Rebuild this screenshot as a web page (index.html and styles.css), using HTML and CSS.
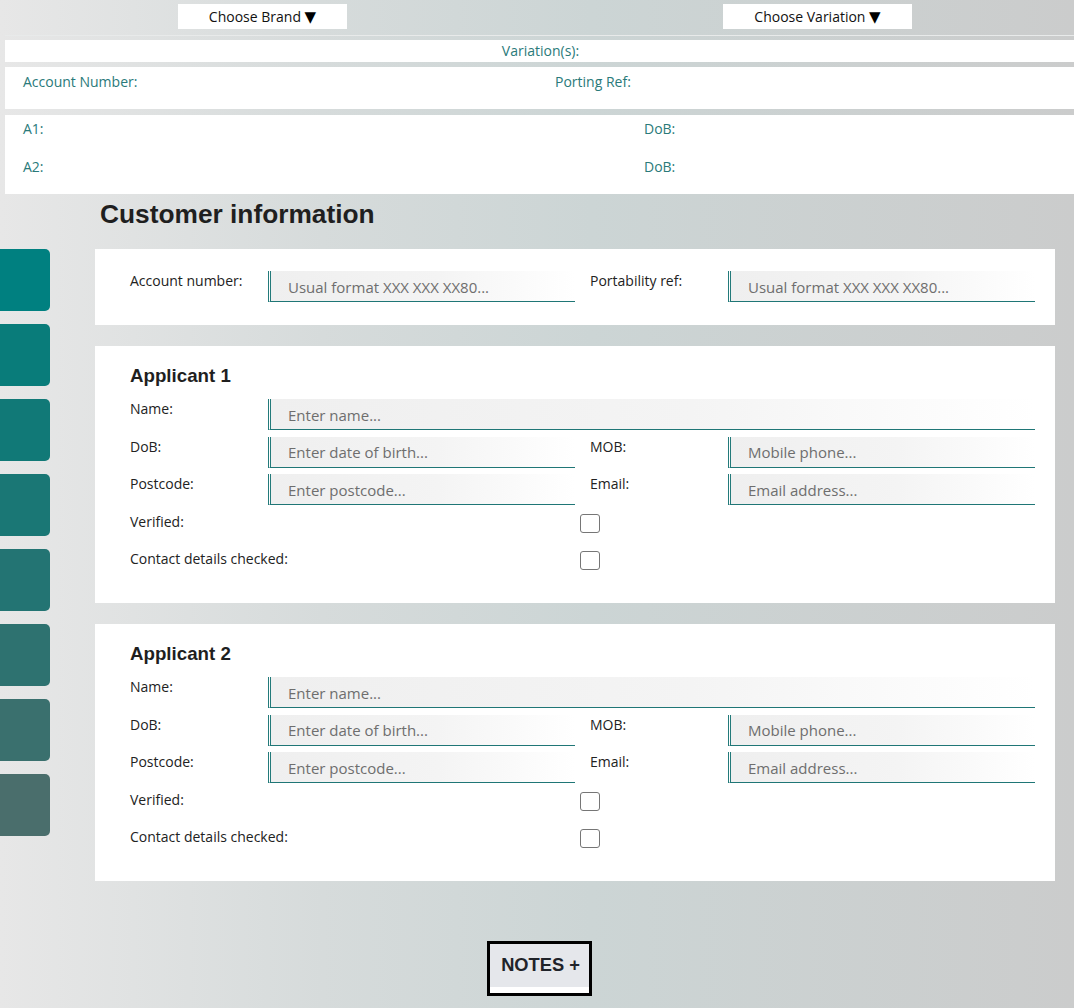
FILE: index.html
```html
<!DOCTYPE html>
<html lang="en">
<head>
<meta charset="utf-8">
<title>Customer information</title>
<link rel="stylesheet" href="styles.css">
</head>
<body>
<header class="topbar">
  <button class="choose choose-brand" type="button">Choose Brand <span class="caret">▼</span></button>
  <button class="choose choose-variation" type="button">Choose Variation <span class="caret">▼</span></button>
</header>

<section class="summary">
  <div class="rule"></div>
  <div class="bar bar-variation">Variation(s):</div>
  <div class="bar bar-account">
    <span>Account Number:</span>
    <span>Porting Ref:</span>
  </div>
  <div class="bar bar-applicants">
    <span>A1:</span><span>DoB:</span>
    <span>A2:</span><span>DoB:</span>
  </div>
</section>

<h1 class="page-title">Customer information</h1>

<div class="main">
  <nav class="tabs">
    <a class="tab t1"></a>
    <a class="tab t2"></a>
    <a class="tab t3"></a>
    <a class="tab t4"></a>
    <a class="tab t5"></a>
    <a class="tab t6"></a>
    <a class="tab t7"></a>
    <a class="tab t8"></a>
  </nav>

  <div class="cards">
    <section class="card card-account">
      <div class="grid">
        <label class="lbl">Account number:</label>
        <input class="field" type="text" placeholder="Usual format XXX XXX XX80...">
        <span></span>
        <label class="lbl">Portability ref:</label>
        <input class="field" type="text" placeholder="Usual format XXX XXX XX80...">
      </div>
    </section>

    <section class="card card-applicant">
      <h2 class="applicant-title">Applicant 1</h2>
      <div class="grid">
        <label class="lbl">Name:</label>
        <input class="field field-wide" type="text" placeholder="Enter name...">
        <label class="lbl">DoB:</label>
        <input class="field" type="text" placeholder="Enter date of birth...">
        <span></span>
        <label class="lbl">MOB:</label>
        <input class="field" type="text" placeholder="Mobile phone...">
        <label class="lbl">Postcode:</label>
        <input class="field" type="text" placeholder="Enter postcode...">
        <span></span>
        <label class="lbl">Email:</label>
        <input class="field" type="text" placeholder="Email address...">
      </div>
      <div class="checks">
        <div class="check-row"><span class="check-lbl">Verified:</span><span class="box"></span></div>
        <div class="check-row"><span class="check-lbl">Contact details checked:</span><span class="box"></span></div>
      </div>
    </section>

    <section class="card card-applicant">
      <h2 class="applicant-title">Applicant 2</h2>
      <div class="grid">
        <label class="lbl">Name:</label>
        <input class="field field-wide" type="text" placeholder="Enter name...">
        <label class="lbl">DoB:</label>
        <input class="field" type="text" placeholder="Enter date of birth...">
        <span></span>
        <label class="lbl">MOB:</label>
        <input class="field" type="text" placeholder="Mobile phone...">
        <label class="lbl">Postcode:</label>
        <input class="field" type="text" placeholder="Enter postcode...">
        <span></span>
        <label class="lbl">Email:</label>
        <input class="field" type="text" placeholder="Email address...">
      </div>
      <div class="checks">
        <div class="check-row"><span class="check-lbl">Verified:</span><span class="box"></span></div>
        <div class="check-row"><span class="check-lbl">Contact details checked:</span><span class="box"></span></div>
      </div>
    </section>
  </div>
</div>

<footer class="footer">
  <button class="notes" type="button"><span class="notes-inner">NOTES +</span></button>
</footer>
</body>
</html>
```

FILE: styles.css
```css
html, body {
  margin: 0;
  padding: 0;
}
body {
  min-height: 1008px;
  background: linear-gradient(90deg, #e7e7e7 0%, #d6dbdb 30%, #ccd5d5 55%, #cbcccc 100%);
  font-family: "Open Sans", "Noto Sans", sans-serif;
  font-size: 14px;
  color: #222;
  overflow-x: hidden;
}

/* top choosers */
.topbar {
  height: 35px;
  display: flex;
  align-items: flex-start;
  padding-top: 4px;
  box-sizing: border-box;
}
.choose {
  height: 25px;
  border: 0;
  background: #fff;
  font-family: "Open Sans", "Noto Sans", sans-serif;
  font-size: 14px;
  color: #111;
  padding: 0;
  line-height: 25px;
  text-align: center;
}
.caret {
  font-family: "DejaVu Sans", sans-serif;
  font-size: 15px;
  color: #000;
}
.choose-brand {
  width: 169px;
  margin-left: 178px;
}
.choose-variation {
  width: 189px;
  margin-left: 376px;
}

/* summary bars */
.summary {
  margin-left: 5px;
  color: #2a7a7a;
  font-size: 14px;
}
.rule {
  height: 1px;
  background: #e8eaea;
  margin-bottom: 4px;
}
.bar {
  background: #fff;
}
.bar-variation {
  height: 22px;
  line-height: 22px;
  text-align: center;
  padding-left: 2px;
}
.bar-account {
  margin-top: 5px;
  height: 42px;
  box-sizing: border-box;
  padding: 5px 0 0 18px;
  display: grid;
  grid-template-columns: 532px 1fr;
  line-height: 20px;
  align-content: start;
}
.bar-applicants {
  margin-top: 6px;
  height: 79px;
  box-sizing: border-box;
  padding: 4px 0 0 18px;
  display: grid;
  grid-template-columns: 621px 1fr;
  grid-auto-rows: 20px;
  row-gap: 18px;
  line-height: 20px;
}

/* heading */
.page-title {
  margin: 0 0 20px 100px;
  padding-top: 5px;
  font-family: "Liberation Sans", Arial, sans-serif;
  font-weight: bold;
  font-size: 26.3px;
  line-height: 30px;
  color: #1f1f1f;
}

/* main area */
.main {
  display: flex;
  align-items: flex-start;
}
.tabs {
  width: 50px;
  display: flex;
  flex-direction: column;
  gap: 13px;
  margin-right: 45px;
}
.tab {
  display: block;
  height: 62px;
  border-radius: 0 5px 5px 0;
}
.t1 { background: #008080; }
.t2 { background: #097c7a; }
.t3 { background: #117977; }
.t4 { background: #1a7775; }
.t5 { background: #237473; }
.t6 { background: #2e7270; }
.t7 { background: #3a706e; }
.t8 { background: #4a6e6c; }

.cards {
  width: 960px;
  display: flex;
  flex-direction: column;
  gap: 21px;
}
.card {
  background: #fff;
  padding: 22px 20px 23px 35px;
}
.card-applicant {
  padding: 19px 20px 32px 35px;
}
.applicant-title {
  margin: 0 0 12px;
  font-family: "Liberation Sans", Arial, sans-serif;
  font-weight: bold;
  font-size: 18.72px;
  line-height: 22px;
  color: #1f1f1f;
}
.grid {
  display: grid;
  grid-template-columns: 138px 307px 15px 138px 307px;
  row-gap: 6.5px;
}
.lbl {
  line-height: 19px;
  color: #222;
}
.field {
  height: 31px;
  box-sizing: border-box;
  margin: 0;
  border: 0;
  border-left: 3px double #237a7a;
  border-bottom: 1px solid #1f7676;
  background: linear-gradient(90deg, #efefef 0%, #f4f4f4 55%, #ffffff 100%);
  padding: 1px 0 0 17px;
  font-family: "Open Sans", "Noto Sans", sans-serif;
  font-size: 15px;
  color: #333;
  outline: none;
  width: 100%;
}
.field::placeholder {
  color: #6e6e6e;
}
.field-wide {
  grid-column: 2 / 6;
}

.checks {
  margin-top: 9px;
  display: flex;
  flex-direction: column;
  gap: 17px;
}
.check-row {
  display: flex;
  align-items: flex-start;
  height: 20px;
}
.check-lbl {
  width: 450px;
  line-height: 16px;
}
.box {
  width: 20px;
  height: 19px;
  box-sizing: border-box;
  border: 1px solid #767676;
  border-radius: 3px;
  background: #fff;
}

/* notes */
.footer {
  display: flex;
  justify-content: center;
  margin-top: 60px;
  padding-left: 5px;
}
.notes {
  width: 105px;
  height: 55px;
  box-sizing: border-box;
  border: 3px solid #000;
  background: #fff;
  padding: 0 0 6px;
  display: flex;
  cursor: pointer;
}
.notes-inner {
  flex: 1;
  background: #e5e7eb;
  display: flex;
  align-items: center;
  justify-content: center;
  font-family: "Liberation Sans", Arial, sans-serif;
  font-weight: bold;
  font-size: 18.3px;
  color: #1f2329;
  padding: 0 0 1px 2px;
}
```
